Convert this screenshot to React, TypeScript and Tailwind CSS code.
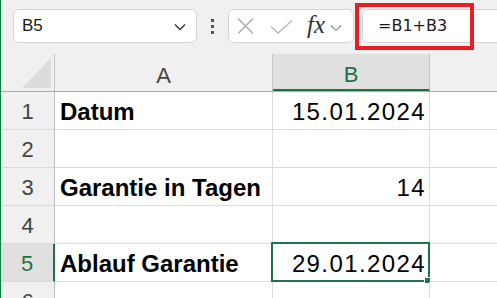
import React from "react";

const rows = [
  { n: "1", a: "Datum", b: "15.01.2024" },
  { n: "2", a: "", b: "" },
  { n: "3", a: "Garantie in Tagen", b: "14" },
  { n: "4", a: "", b: "" },
  { n: "5", a: "Ablauf Garantie", b: "29.01.2024", sel: true },
  { n: "6", a: "", b: "" },
];

export default function App() {
  return (
    <div className="w-[497px] h-[298px] overflow-hidden bg-white border-l border-[#107c41] font-['Liberation_Sans',Arial,sans-serif] relative">
      {/* toolbar */}
      <div className="h-[54px] bg-[#f0f0f0] flex items-start">
        <div className="ml-[12px] mt-[9px] w-[184px] h-[34px] shrink-0 rounded-[6px] border border-[#d4d4d4] bg-white flex items-center justify-between pl-[8px] pr-[10px]">
          <span className="text-[17px] text-[#1a1a1a]">B5</span>
          <svg width="12" height="8" viewBox="0 0 12 8" className="mt-[2px]">
            <path d="M1 1.5 L6 6.5 L11 1.5" fill="none" stroke="#333" strokeWidth="1.4" />
          </svg>
        </div>
        <div className="ml-[14px] mt-[19px] w-[3px] flex flex-col gap-[3px] shrink-0">
          <div className="w-[3px] h-[3px] bg-[#555]" />
          <div className="w-[3px] h-[3px] bg-[#555]" />
          <div className="w-[3px] h-[3px] bg-[#555]" />
        </div>
        <div className="ml-[14px] mt-[9px] w-[126px] h-[34px] shrink-0 rounded-[6px] border border-[#d4d4d4] bg-white flex items-center">
          <svg width="17" height="16" viewBox="0 0 17 16" className="ml-[8px]">
            <path d="M1 0.5 L16 15.5 M16 0.5 L1 15.5" stroke="#a8a8a8" strokeWidth="1.3" />
          </svg>
          <svg width="23" height="14" viewBox="0 0 23 14" className="ml-[16px] mt-[2px]">
            <path d="M1 6.5 L8 13 L22 0.5" fill="none" stroke="#b4b4b4" strokeWidth="1.3" />
          </svg>
          <span className="ml-[14px] text-[25px] italic text-[#333] font-['Liberation_Serif',serif] leading-none mb-[3px]">fx</span>
          <svg width="12" height="8" viewBox="0 0 12 8" className="ml-[5px] mt-[3px]">
            <path d="M1 1.5 L6 6.5 L11 1.5" fill="none" stroke="#999" strokeWidth="1.2" />
          </svg>
        </div>
        <div className="ml-[8px] mt-[9px] h-[34px] flex-1 -mr-[10px] rounded-[6px] border border-[#d4d4d4] bg-white flex items-center pl-[15px]">
          <span className="text-[16px] text-[#1a1a1a] font-['DejaVu_Sans',sans-serif]">=B1+B3</span>
        </div>
      </div>

      {/* red annotation */}
      <div className="absolute left-[354px] top-[3px] w-[119px] h-[47px] border-[4px] border-[#ea1c24]" />

      {/* header row */}
      <div className="flex h-[38px] bg-[#f0f0f0] border-b border-[#ababab]">
        <div className="w-[54px] shrink-0 border-r border-[#c4c4c4] relative">
          <svg width="54" height="37" viewBox="0 0 54 37" className="absolute left-0 top-0">
            <polygon points="50,4 50,34 21,34" fill="#dcdcdc" />
          </svg>
        </div>
        <div className="w-[218px] shrink-0 border-r border-[#c4c4c4] flex items-center justify-center pt-[5px] text-[22px] text-[#444]">
          A
        </div>
        <div className="w-[157px] shrink-0 border-r border-[#c4c4c4] bg-[#e0e0e0] border-b-2 border-b-[#217346] flex items-center justify-center pt-[5px] text-[22px] text-[#217346]">
          B
        </div>
        <div className="flex-1" />
      </div>

      {rows.map((r) => (
        <div key={r.n} className="flex h-[38px]">
          <div
            className={
              r.sel
                ? "w-[54px] shrink-0 bg-[#e0e0e0] border-r-2 border-r-[#217346] border-b border-b-[#dadada] flex items-center justify-center text-[22px] text-[#217346] pt-[2px]"
                : "w-[54px] shrink-0 bg-[#f0f0f0] border-r border-r-[#bcbcbc] border-b border-b-[#dadada] flex items-center justify-center text-[22px] text-[#444] pt-[2px]"
            }
          >
            {r.n}
          </div>
          <div className="w-[218px] shrink-0 border-r border-b border-[#dcdcdc] flex items-center pl-[5px] pt-[2px] text-[24px] font-bold text-black whitespace-nowrap">
            {r.a}
          </div>
          <div className="w-[157px] shrink-0 border-r border-b border-[#dcdcdc] flex items-center justify-end pr-[3px] pt-[2px] text-[24px] text-black tracking-[1.4px] relative">
            {r.b}
            {r.sel && (
              <>
                <div className="absolute -left-[2px] -top-[2px] -right-[1px] -bottom-[1px] border-2 border-[#217346]" />
                <div className="absolute left-[151px] top-[33px] w-[7px] h-[7px] bg-[#217346] border border-white" />
              </>
            )}
          </div>
          <div className="flex-1 border-b border-[#dcdcdc]" />
        </div>
      ))}
    </div>
  );
}
